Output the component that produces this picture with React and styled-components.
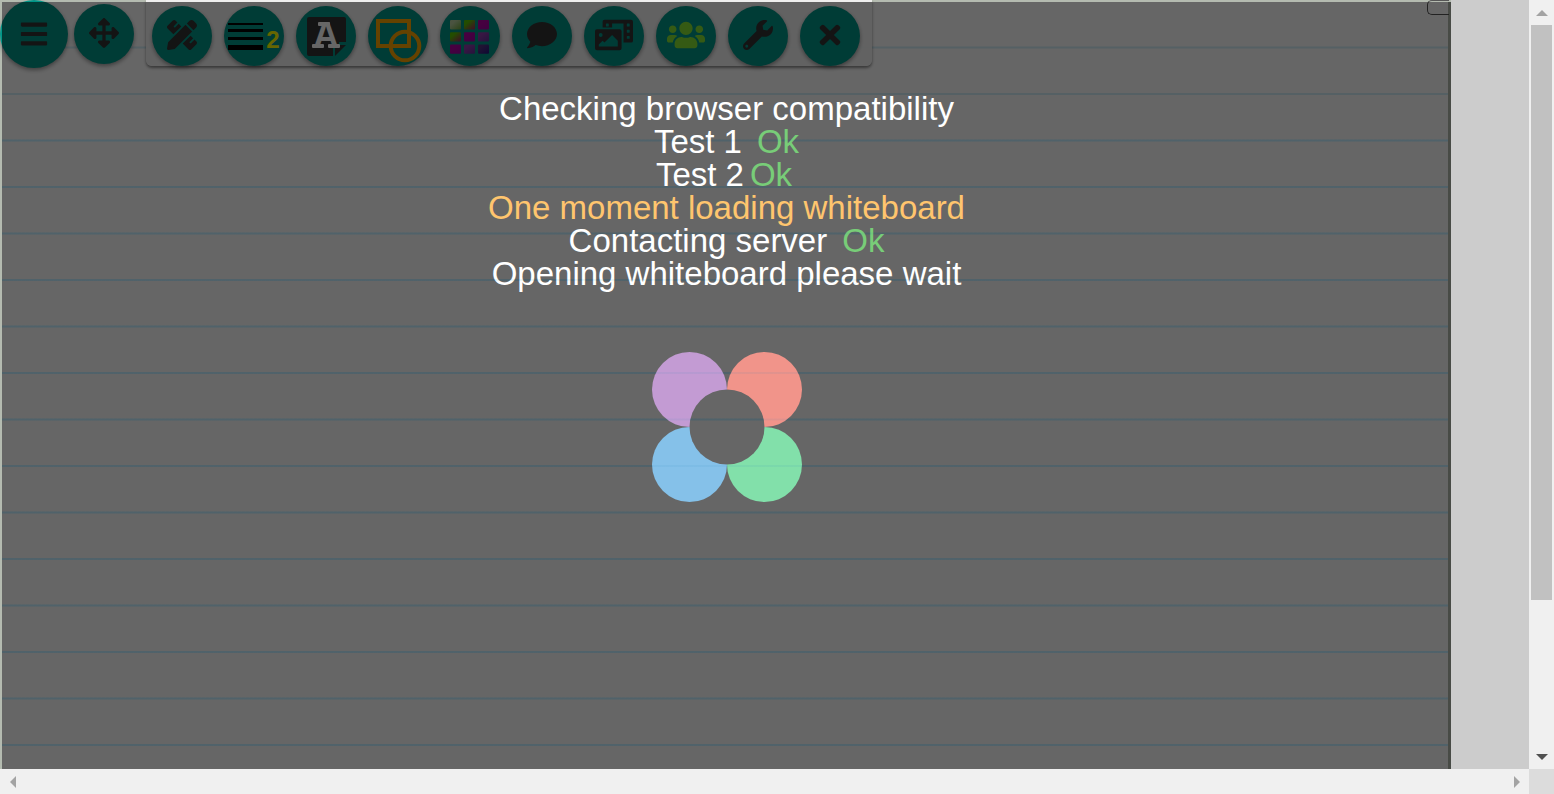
import React from "react";
import styled, { createGlobalStyle } from "styled-components";
import {
  FaBars,
  FaArrowsAlt,
  FaPencilRuler,
  FaComment,
  FaPhotoVideo,
  FaUsers,
  FaWrench,
  FaTimes,
} from "react-icons/fa";

const GlobalStyle = createGlobalStyle`
  *, *::before, *::after { box-sizing: border-box; }
  body {
    margin: 0;
    font-family: "Liberation Sans", Arial, sans-serif;
    overflow: hidden;
  }
`;

const Frame = styled.div`
  display: grid;
  grid-template-columns: minmax(0, 1fr) 25px;
  grid-template-rows: minmax(0, 1fr) 25px;
  height: 100vh;
  background: #f0f0f0;
`;

const Viewport = styled.main`
  display: flex;
  padding-right: 78px;
  background: #ccc;
`;

const Board = styled.section`
  position: relative;
  flex: 1;
  border: 2px solid #b4bbb0;
  border-width: 2px 3px 0 2px;
  background-color: #fff;
  background-image: linear-gradient(
    transparent 44px, #d4f0fa 45px, #d4f0fa 46px, transparent 47px,
    transparent 91px, #d4f0fa 91px, #d4f0fa 93px, transparent 93px
  );
  background-size: 100% 93px;
`;

const Tools = styled.header`
  position: absolute;
  top: -2px;
  left: -2px;
  display: flex;
  align-items: flex-start;
`;

const Panel = styled.nav`
  display: flex;
  gap: 12px;
  margin-left: 12px;
  padding: 6px 12px 0 6px;
  border-radius: 0 0 6px 6px;
  background: rgba(245, 245, 245, 0.9);
  box-shadow: 0 2px 3px rgba(0, 0, 0, 0.45);
`;

const RoundButton = styled.button`
  display: flex;
  align-items: center;
  justify-content: center;
  width: ${(p) => (p.$large ? 68 : 60)}px;
  height: ${(p) => (p.$large ? 68 : 60)}px;
  padding: 0 0 ${(p) => (p.$raised ? 2 : 0)}px;
  border: 0;
  border-radius: 50%;
  background: #009688;
  color: ${(p) => p.$color || "#333"};
  box-shadow: 0 2px 4px rgba(0, 0, 0, 0.4);
  cursor: pointer;

  & > svg {
    flex: none;
    width: ${(p) => p.$icon || 30}px;
    height: ${(p) => p.$icon || 30}px;
    overflow: visible;
  }
`;

const MoveSlot = styled.div`
  padding: 4px 0 0 6px;
`;

const Thickness = styled.span`
  display: flex;
  align-items: flex-end;
  gap: 3px;
  color: #ff0;
  font: bold 24px/20px "Liberation Sans", Arial, sans-serif;
`;

const Notch = styled.div`
  position: absolute;
  top: -2px;
  right: -1px;
  width: 22px;
  height: 15px;
  border: 1px solid #555;
  border-right: 0;
  border-radius: 5px 0 0 5px;
`;

const Overlay = styled.div`
  position: absolute;
  inset: 0 -3px 0 0;
  display: flex;
  flex-direction: column;
  align-items: center;
  padding-top: 90px;
  background: rgba(0, 0, 0, 0.6);

  &::after {
    content: "";
    position: absolute;
    inset: 93px 3px 0 0;
    background-image: linear-gradient(
      transparent 44px, #1e82b414 45px, #1e82b414 46px, transparent 47px,
      transparent 91px, #1e82b414 91px, #1e82b414 93px, transparent 93px
    );
    background-size: 100% 93px;
    pointer-events: none;
  }
`;

const Status = styled.p`
  margin: 0;
  color: ${(p) => (p.$loading ? "#ffc56e" : "#fff")};
  font-size: 33px;
  line-height: 33px;
`;

const Ok = styled.span`
  padding: ${(p) => (p.$near ? "0 5px 0 6px" : "0 0 0 15px")};
  color: #78cd78;
`;

const Spinner = styled.svg`
  width: 150px;
  height: 150px;
  margin-top: 62px;
`;

const VerticalBar = styled.div`
  display: grid;
  grid-template-rows: 25px minmax(0, 1fr) 25px;
`;

const HorizontalBar = styled.div`
  display: flex;
  justify-content: space-between;
`;

const Thumb = styled.div`
  width: 21px;
  height: 80%;
  margin: 0 2px;
  background: #c1c1c1;
`;

const Corner = styled.div`
  background: #dcdcdc;
`;

const ArrowButton = styled.button`
  display: flex;
  align-items: center;
  justify-content: center;
  width: 25px;
  height: 25px;
  padding: 0;
  border: 0;
  background: transparent;
  color: ${(p) => (p.$active ? "#505050" : "#a3a3a3")};

  & > svg {
    width: 12px;
    height: 12px;
    transform: rotate(${(p) => p.$turn || 0}deg);
  }
`;

function Arrow({ label, turn, active }) {
  return (
    <ArrowButton type="button" aria-label={label} $turn={turn} $active={active}>
      <svg viewBox="0 0 12 12" aria-hidden="true">
        <path d="M0 9h12L6 3z" fill="currentColor" />
      </svg>
    </ArrowButton>
  );
}

function LinesIcon() {
  return (
    <svg width="35" height="28" viewBox="0 0 35 28" fill="#000" aria-hidden="true">
      <rect y="1" width="35" height="2" />
      <rect y="7" width="35" height="3" />
      <rect y="15" width="35" height="3" />
      <rect y="23" width="35" height="5" />
    </svg>
  );
}

function TextIcon() {
  return (
    <svg viewBox="0 0 40 40" aria-hidden="true">
      <path d="M3 1h35a2 2 0 0 1 2 2v23h-7v5h-6v9H3a2 2 0 0 1-2-2V3a2 2 0 0 1 2-2z" fill="#333" />
      <path d="M29 29h11L29 40z" fill="#333" />
      <g fill="#fff">
        <text x="20" y="32" textAnchor="middle" fontFamily="Liberation Sans" fontWeight="bold" fontSize="36">
          A
        </text>
        <rect x="12" y="6" width="12" height="4" rx="1" />
        <rect x="6" y="28" width="12" height="4" rx="1" />
        <rect x="22" y="28" width="12" height="4" rx="1" />
      </g>
    </svg>
  );
}

function ShapesIcon() {
  return (
    <svg viewBox="0 0 50 50" fill="none" stroke="#ffa500" strokeWidth="4" aria-hidden="true">
      <rect x="5" y="10" width="31" height="25" />
      <circle cx="32" cy="35" r="14.3" />
    </svg>
  );
}

const TONES = [
  ["#b8d0a0", "#70a840"],
  ["#58c000", "#a0285c"],
  ["#b000a0", "#a000a0"],
  ["#8c3aa8", "#603098"],
  ["#503080", "#281880"],
];

function PaletteIcon() {
  const cells = [0, 1, 2].flatMap((row) => [0, 1, 2].map((col) => [row, col]));
  return (
    <svg viewBox="0 0 40 40" aria-hidden="true">
      <defs>
        {TONES.map(([from, to], i) => (
          <linearGradient key={from} id={`tone${i}`} x1="0" y1="0" x2="1" y2="1">
            <stop offset="0.3" stopColor={from} />
            <stop offset="0.95" stopColor={to} />
          </linearGradient>
        ))}
      </defs>
      {cells.map(([row, col]) => (
        <rect
          key={`${row}-${col}`}
          x={col * 14}
          y={4 + row * 12.2}
          width="11"
          height="9.4"
          rx="1"
          fill={`url(#tone${row + col})`}
        />
      ))}
    </svg>
  );
}

function Loader() {
  return (
    <Spinner viewBox="0 0 150 150" role="img" aria-label="Loading">
      <mask id="hole">
        <rect width="150" height="150" fill="#fff" />
        <circle cx="75" cy="75" r="37.5" fill="#000" />
      </mask>
      <g mask="url(#hole)">
        <circle cx="37.5" cy="37.5" r="37.5" fill="#c39bd3" />
        <circle cx="112.5" cy="37.5" r="37.5" fill="#f1948a" />
        <circle cx="37.5" cy="112.5" r="37.5" fill="#85c1e9" />
        <circle cx="112.5" cy="112.5" r="37.5" fill="#82e0aa" />
      </g>
    </Spinner>
  );
}

export default function App() {
  return (
    <>
      <GlobalStyle />
      <Frame>
        <Viewport>
          <Board>
            <Tools>
              <RoundButton type="button" aria-label="Menu" $large>
                <FaBars />
              </RoundButton>
              <MoveSlot>
                <RoundButton type="button" aria-label="Move" $raised>
                  <FaArrowsAlt />
                </RoundButton>
              </MoveSlot>
              <Panel>
                <RoundButton type="button" aria-label="Draw" $raised>
                  <FaPencilRuler />
                </RoundButton>
                <RoundButton type="button" aria-label="Line thickness">
                  <Thickness>
                    <LinesIcon />2
                  </Thickness>
                </RoundButton>
                <RoundButton type="button" aria-label="Text" $icon={40}>
                  <TextIcon />
                </RoundButton>
                <RoundButton type="button" aria-label="Shapes" $icon={50}>
                  <ShapesIcon />
                </RoundButton>
                <RoundButton type="button" aria-label="Colours" $icon={40}>
                  <PaletteIcon />
                </RoundButton>
                <RoundButton type="button" aria-label="Chat" $raised>
                  <FaComment />
                </RoundButton>
                <RoundButton type="button" aria-label="Media" $raised $icon={38}>
                  <FaPhotoVideo />
                </RoundButton>
                <RoundButton type="button" aria-label="Users" $raised $icon={38} $color="#84e034">
                  <FaUsers />
                </RoundButton>
                <RoundButton type="button" aria-label="Settings" $raised>
                  <FaWrench />
                </RoundButton>
                <RoundButton type="button" aria-label="Close" $raised>
                  <FaTimes />
                </RoundButton>
              </Panel>
            </Tools>
            <Notch />
            <Overlay>
              <Status>Checking browser compatibility</Status>
              <Status>Test 1<Ok>Ok</Ok></Status>
              <Status>Test 2<Ok $near>Ok</Ok></Status>
              <Status $loading>One moment loading whiteboard</Status>
              <Status>Contacting server<Ok>Ok</Ok></Status>
              <Status>Opening whiteboard please wait</Status>
              <Loader />
            </Overlay>
          </Board>
        </Viewport>
        <VerticalBar>
          <Arrow label="Scroll up" />
          <Thumb />
          <Arrow label="Scroll down" turn={180} active />
        </VerticalBar>
        <HorizontalBar>
          <Arrow label="Scroll left" turn={-90} />
          <Arrow label="Scroll right" turn={90} />
        </HorizontalBar>
        <Corner />
      </Frame>
    </>
  );
}
